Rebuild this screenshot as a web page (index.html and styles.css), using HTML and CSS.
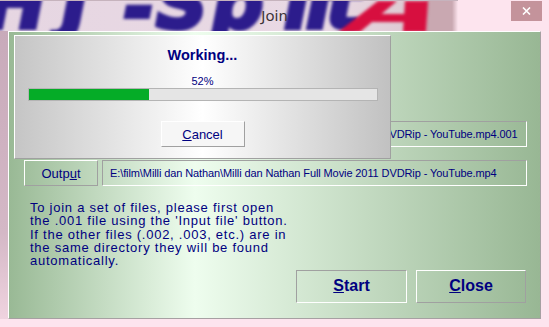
FILE: index.html
```html
<!DOCTYPE html>
<html lang="en">
<head>
    <meta charset="UTF-8">
    <meta name="viewport" content="width=device-width, initial-scale=1.0">
    <title>Join</title>
    <link rel="stylesheet" href="styles.css">
</head>
<body>
    <div class="window">
        <!-- Title bar with the HJ-Split banner behind it -->
        <div class="titlebar">
            <div class="title-art" aria-hidden="true">
                <span class="art-letter l-h">H</span>
                <span class="art-letter l-j">J</span>
                <span class="art-letter l-dash">-</span>
                <span class="art-letter l-s">S</span>
                <span class="art-letter l-p">p</span>
                <span class="art-letter l-l">l</span>
                <span class="art-letter l-i">i</span>
                <span class="art-letter l-t">t</span>
                <svg class="art-mark" width="458" height="31" viewBox="0 0 458 31">
                    <polygon points="405,0 428,0 426,31 403,31" fill="#d70f3f"/>
                    <polygon points="378,0 397,0 360,31 338,31" fill="#d70f3f"/>
                    <polygon points="372,13 410,13 409,21 366,21" fill="#d70f3f"/>
                </svg>
            </div>
            <span class="title">Join</span>
            <button class="close-btn" type="button" title="Close">
                <svg width="9" height="8" viewBox="0 0 9 8">
                    <path d="M1 0.5 L8 7.5 M8 0.5 L1 7.5" stroke="#fff" stroke-width="1.6"/>
                </svg>
            </button>
        </div>

        <div class="frame">
            <div class="edge-left"></div>

            <div class="client">
                <div class="row">
                    <button class="btn-small" type="button"><u>I</u>nput file</button>
                    <div class="path">E:\film\Milli dan Nathan\Milli dan Nathan Full Movie 2011 DVDRip - YouTube.mp4.001</div>
                </div>
                <div class="row">
                    <button class="btn-small" type="button">Outp<u>u</u>t</button>
                    <div class="path">E:\film\Milli dan Nathan\Milli dan Nathan Full Movie 2011 DVDRip - YouTube.mp4</div>
                </div>

                <p class="help">
                    To join a set of files, please first open<br>
                    the .001 file using the 'Input file' button.<br>
                    If the other files (.002, .003, etc.) are in<br>
                    the same directory they will be found<br>
                    automatically.
                </p>

                <div class="actions">
                    <button class="btn-big btn-start" type="button"><u>S</u>tart</button>
                    <button class="btn-big btn-close" type="button"><u>C</u>lose</button>
                </div>

                <!-- Progress popup -->
                <div class="progress-dialog">
                    <div class="working">Working...</div>
                    <div class="pct">52%</div>
                    <div class="bar">
                        <div class="fill" style="width: 34.5%"></div>
                    </div>
                    <button class="cancel-btn" type="button"><u>C</u>ancel</button>
                </div>
            </div>
        </div>
    </div>
</body>
</html>
```

FILE: styles.css
```css
/* Global Styling */
body {
    margin: 0;
    font-family: "Liberation Sans", Arial, sans-serif;
    background-color: #fde4ee;
}

.window {
    width: 549px;
    height: 327px;
    display: flex;
    flex-direction: column;
    background-color: #fde4ee;
    overflow: hidden;
}

/* Title Bar */
.titlebar {
    position: relative;
    height: 31px;
    flex: none;
    display: flex;
    justify-content: center;
    box-sizing: border-box;
    padding-top: 5px;
}

.title-art {
    position: absolute;
    left: 0;
    top: 0;
    width: 458px;
    height: 31px;
    overflow: hidden;
    background: linear-gradient(to right, #e6d6e2 0, #e9d9e4 330px, #dcc8d0 420px, #c9a8b1 428px, #c9a8b1 452px, #fce4ee 458px);
    border-top: 1px solid #c6b3bd;
    box-sizing: border-box;
}

/* big blurred logo letters, only their lower half shows */
.art-letter {
    position: absolute;
    top: -34px;
    font-family: "DejaVu Sans", sans-serif;
    font-weight: bold;
    font-style: italic;
    font-size: 72px;
    line-height: 1;
    color: #2c1c8c;
    -webkit-text-stroke: 4px #2c1c8c;
    filter: blur(1.6px);
}

.l-h { left: -14px; }
.l-j { left: 62px; }
.l-dash { left: 124px; top: -30px; }
.l-s { left: 156px; }
.l-p { left: 212px; }
.l-l { left: 284px; }
.l-i { left: 306px; }
.l-t { left: 326px; }

.art-mark {
    position: absolute;
    left: 0;
    top: 0;
    filter: blur(1.6px);
}

.title {
    position: relative;
    z-index: 1;
    font-family: "Noto Sans", sans-serif;
    font-size: 15px;
    line-height: 20px;
    color: #3b3235;
}

.close-btn {
    position: absolute;
    left: 511px;
    top: 1px;
    width: 31px;
    height: 20px;
    padding: 0;
    border: none;
    background-color: #c4939b;
    display: flex;
    align-items: center;
    justify-content: center;
}

/* Frame and Client Area */
.frame {
    display: flex;
    flex: 1;
    padding: 0 8px 8px 0;
}

.edge-left {
    width: 8px;
    background: linear-gradient(to bottom, #c8aaba, #d4b8c6 70%, #efd3df);
}

.client {
    position: relative;
    width: 533px;
    height: 288px;
    box-sizing: border-box;
    border: 1px solid;
    border-color: #ffffff #a6a0a2 #a6a0a2 #ffffff;
    background: linear-gradient(to right, #99b995 0%, #eefdee 35%, #98b794 100%);
    padding: 89px 13px 0 15px;
    display: flex;
    flex-direction: column;
}

/* File Rows */
.row {
    display: flex;
    gap: 4px;
    height: 26px;
}

.row + .row {
    margin-top: 13px;
}

.btn-small {
    width: 74px;
    height: 26px;
    padding: 0;
    border: 1px solid;
    border-color: #ffffff #a0a0a0 #a0a0a0 #ffffff;
    background: transparent;
    font-family: "Liberation Sans", Arial, sans-serif;
    font-size: 13px;
    color: #000080;
}

.path {
    width: 425px;
    height: 26px;
    box-sizing: border-box;
    border: 1px solid;
    border-color: #a0a0a0 #ffffff #ffffff #a0a0a0;
    padding-left: 7px;
    font-size: 11px;
    letter-spacing: -0.1px;
    line-height: 24px;
    color: #000080;
    white-space: nowrap;
    overflow: hidden;
}

/* Help Text */
.help {
    margin: 15px 0 0 6px;
    font-size: 13px;
    letter-spacing: 0.75px;
    line-height: 13.33px;
    color: #000080;
}

/* Start / Close */
.actions {
    display: flex;
    justify-content: flex-end;
    gap: 9px;
    margin-top: 2px;
    padding-right: 1px;
}

.btn-big {
    width: 111px;
    height: 33px;
    padding: 0;
    border: 1px solid;
    background: transparent;
    font-family: "Liberation Sans", Arial, sans-serif;
    font-size: 16px;
    font-weight: bold;
    color: #000080;
}

.btn-start {
    border-color: #a0a0a0 #ffffff #ffffff #a0a0a0;
}

.btn-close {
    width: 110px;
    border-color: #ffffff #a0a0a0 #a0a0a0 #ffffff;
}

/* Progress Dialog */
.progress-dialog {
    position: absolute;
    left: 5px;
    top: 3px;
    width: 377px;
    height: 124px;
    box-sizing: border-box;
    border: 1px solid;
    border-color: #ffffff #a0a0a0 #a0a0a0 #ffffff;
    background: linear-gradient(to right, #c5c5c5 0%, #ffffff 50%, #c1c1c1 100%);
    display: flex;
    flex-direction: column;
    align-items: center;
}

.working {
    margin-top: 10px;
    font-size: 14.5px;
    font-weight: bold;
    line-height: 18px;
    color: #000080;
}

.pct {
    margin-top: 11px;
    font-size: 11px;
    line-height: 13px;
    color: #000080;
}

.bar {
    width: 350px;
    height: 13px;
    box-sizing: border-box;
    border: 1px solid #b4b4b4;
    background-color: #e5e5e5;
}

.fill {
    height: 100%;
    background-color: #05ac27;
}

.cancel-btn {
    margin-top: 20px;
    width: 84px;
    height: 26px;
    padding: 0;
    border: 1px solid;
    border-color: #ffffff #a0a0a0 #a0a0a0 #ffffff;
    background-color: #f6f6f6;
    font-family: "Liberation Sans", Arial, sans-serif;
    font-size: 13px;
    color: #000080;
}
```
